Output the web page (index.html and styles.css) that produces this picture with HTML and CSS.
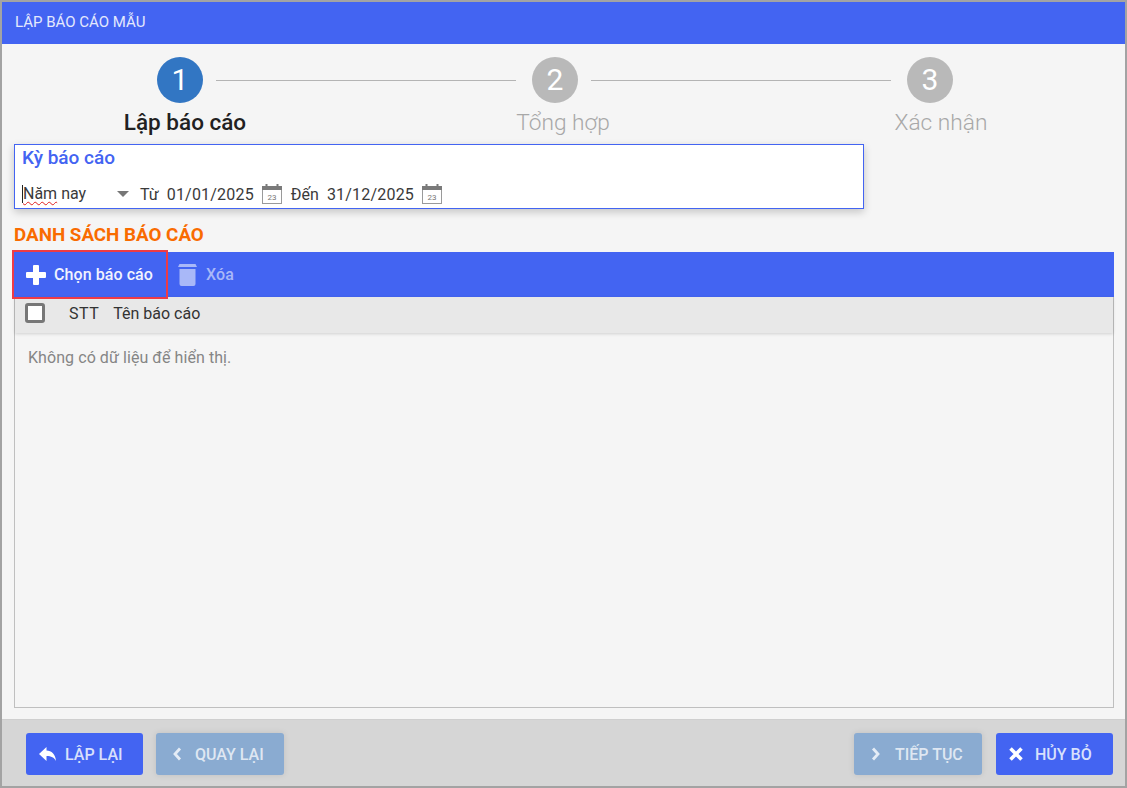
FILE: index.html
```html
<!DOCTYPE html>
<html lang="vi">
<head>
<meta charset="utf-8">
<title>Lập báo cáo mẫu</title>
<link rel="stylesheet" href="styles.css">
</head>
<body>
<div class="window">
  <header class="title-bar">LẬP BÁO CÁO MẪU</header>
  <main class="content">
    <div class="step-track">
      <div class="step-circle active">1</div>
      <div class="step-line"></div>
      <div class="step-circle">2</div>
      <div class="step-line"></div>
      <div class="step-circle">3</div>
    </div>
    <div class="step-labels">
      <div class="step-label active">Lập báo cáo</div>
      <div class="step-label">Tổng hợp</div>
      <div class="step-label">Xác nhận</div>
    </div>
    <section class="period">
      <div class="period-title">Kỳ báo cáo</div>
      <div class="period-row">
        <div class="period-select"><span class="caret-text"><span class="squiggle">Năm</span> nay</span><span class="arrow"></span></div>
        <span class="lbl">Từ</span>
        <span class="date">01/01/2025</span>
        <svg class="cal" viewBox="0 0 20 20" width="20" height="20">
          <rect x="0.500" y="2.500" width="19" height="17" fill="#fff" stroke="#9a9a9a"/>
          <rect x="0" y="2" width="20" height="4" fill="#7a7a7a"/>
          <rect x="3.500" y="0" width="2" height="3" fill="#7a7a7a"/>
          <rect x="14.500" y="0" width="2" height="3" fill="#7a7a7a"/>
          <text x="10" y="16" class="cal-num">23</text>
        </svg>
        <span class="lbl lbl-den">Đến</span>
        <span class="date">31/12/2025</span>
        <svg class="cal" viewBox="0 0 20 20" width="20" height="20">
          <rect x="0.500" y="2.500" width="19" height="17" fill="#fff" stroke="#9a9a9a"/>
          <rect x="0" y="2" width="20" height="4" fill="#7a7a7a"/>
          <rect x="3.500" y="0" width="2" height="3" fill="#7a7a7a"/>
          <rect x="14.500" y="0" width="2" height="3" fill="#7a7a7a"/>
          <text x="10" y="16" class="cal-num">23</text>
        </svg>
      </div>
    </section>
    <h2 class="list-title">DANH SÁCH BÁO CÁO</h2>
    <div class="toolbar">
      <button class="tool tool-add">
        <svg viewBox="0 0 20 20" width="20" height="20"><path d="M8 0h4a1 1 0 0 1 1 1v6h6a1 1 0 0 1 1 1v4a1 1 0 0 1-1 1h-6v6a1 1 0 0 1-1 1H8a1 1 0 0 1-1-1v-6H1a1 1 0 0 1-1-1V8a1 1 0 0 1 1-1h6V1a1 1 0 0 1 1-1z" fill="#fff"/></svg>
        <span>Chọn báo cáo</span>
      </button>
      <button class="tool tool-del">
        <svg viewBox="0 0 19 22" width="19" height="22"><path d="M1.500 0h16L19 3H0zM1.500 5h16v15a2 2 0 0 1-2 2h-12a2 2 0 0 1-2-2z" fill="#a9b8f8"/></svg>
        <span>Xóa</span>
      </button>
    </div>
    <div class="grid">
      <div class="grid-head">
        <span class="check"></span>
        <span class="col-stt">STT</span>
        <span class="col-name">Tên báo cáo</span>
      </div>
      <div class="grid-empty">Không có dữ liệu để hiển thị.</div>
    </div>
  </main>
  <footer class="footer">
    <button class="btn">
      <svg viewBox="0 0 17 14" width="17" height="14"><path d="M7.500 0v3.500c5 .2 9 3.500 9.500 10.500-1.800-3.600-4.800-5-9.500-5v5L0 7z" fill="#fff"/></svg>
      <span>LẬP LẠI</span>
    </button>
    <button class="btn btn-off btn-back">
      <svg viewBox="0 0 9 14" width="9" height="14"><path d="M7 1.500 2 7l5 5.500" fill="none" stroke="#e4ecf6" stroke-width="2.800"/></svg>
      <span>QUAY LẠI</span>
    </button>
    <div class="spacer"></div>
    <button class="btn btn-off btn-next">
      <svg viewBox="0 0 9 14" width="9" height="14"><path d="M2 1.500 7 7l-5 5.500" fill="none" stroke="#e4ecf6" stroke-width="2.800"/></svg>
      <span>TIẾP TỤC</span>
    </button>
    <button class="btn btn-cancel">
      <svg viewBox="0 0 14 14" width="14" height="14"><path d="M1.500 1.500l11 11M12.500 1.500l-11 11" fill="none" stroke="#fff" stroke-width="3.600"/></svg>
      <span>HỦY BỎ</span>
    </button>
  </footer>
</div>
</body>
</html>
```
FILE: styles.css
```css
* { box-sizing: border-box; }
html, body { margin: 0; height: 100%; }
body { font-family: Roboto, "Liberation Sans", sans-serif; background: #f5f5f5; }

.window {
  width: 1127px;
  height: 788px;
  border: 2px solid #a3a3a3;
  display: flex;
  flex-direction: column;
  background: #f5f5f5;
}

.title-bar {
  height: 42px;
  flex: none;
  background: #4364f2;
  color: #e4e9fd;
  font-size: 15px;
  line-height: 40px;
  padding-left: 13px;
}

.content { flex: 1; padding: 13px 11px 11px 12px; display: flex; flex-direction: column; min-height: 0; }

.step-track { display: flex; align-items: center; padding-left: 143px; height: 46px; flex: none; }
.step-circle {
  width: 46px; height: 46px; flex: none; border-radius: 50%;
  background: #b9b9b9; color: #fff;
  font-size: 30px; line-height: 46px; text-align: center;
}
.step-circle.active { background: #3276c3; }
.step-line { width: 300px; height: 1px; background: #b4b4b4; margin: 0 16px 0 13px; flex: none; }

.step-labels { display: flex; gap: 138px; padding-left: 51px; height: 41px; flex: none; }
.step-label { width: 240px; flex: none; text-align: center; font-size: 22.700px; font-weight: 300; color: #a8a8a8; white-space: nowrap; line-height: 39px; }
.step-label.active { font-size: 22.500px; font-weight: 500; color: #212121; }

.period {
  width: 850px; height: 65px; flex: none;
  background: #fff;
  border: 1px solid #4364f2;
  box-shadow: 0 3px 8px rgba(0,0,0,.2);
  padding: 2px 7px;
}
.period-title { color: #4364f2; font-size: 19px; font-weight: 500; line-height: 22px; }
.period-row { display: flex; align-items: center; height: 24px; margin-top: 13px; font-size: 16px; color: #3a3a3a; }
.period-select { width: 108px; display: flex; align-items: center; justify-content: space-between; flex: none; padding-right: 1px; }
.caret-text { border-left: 1px solid #222; line-height: 18px; }
.squiggle { text-decoration: underline wavy #e02020 1px; text-underline-offset: 2px; }
.arrow { width: 0; height: 0; border-left: 6px solid transparent; border-right: 6px solid transparent; border-top: 6px solid #777; }
.lbl { margin-left: 10px; }
.date { margin-left: 8px; letter-spacing: .2px; }
.cal { margin-left: 8px; flex: none; }
.cal-num { font: 8px Roboto, sans-serif; fill: #777; text-anchor: middle; }
.lbl-den { margin-left: 9px; }

.list-title { margin: 16px 0 6px; color: #f96b00; font-size: 18.800px; font-weight: 700; line-height: 21px; flex: none; }

.toolbar { height: 45px; flex: none; background: #4364f2; display: flex; align-items: center; width: 1100px; }
.tool { height: 45px; border: 0; background: none; display: flex; align-items: center; font: 500 16px Roboto, sans-serif; letter-spacing: .08px; padding: 0; position: relative; }
.tool-add { width: 152px; padding-left: 12px; gap: 8px; color: #f1f3fe; outline: 2px solid #ee3b47; }
.tool-del { margin-left: 12px; gap: 9px; color: #a9b8f8; }
.tool-del svg { margin-top: 1px; }

.grid { flex: 1; width: 1100px; border: 1px solid #bfbfbf; border-top: 0; display: flex; flex-direction: column; min-height: 0; }
.grid-head { height: 36px; flex: none; background: #e8e8e8; box-shadow: 0 1px 3px rgba(0,0,0,.15); display: flex; align-items: center; font-size: 16px; color: #333; padding-bottom: 4px; }
.check { width: 20px; height: 20px; background: #fff; border: 3px solid #777; border-radius: 3px; margin-left: 10px; flex: none; }
.col-stt { margin-left: 24px; letter-spacing: .5px; }
.col-name { margin-left: 14px; }
.grid-empty { padding: 16px 13px; font-size: 16px; letter-spacing: .07px; line-height: 18px; color: #858585; }

.footer { height: 67px; flex: none; background: #d6d6d6; border-top: 1px solid #cfcfcf; display: flex; align-items: center; padding: 2px 12px 0 24px; }
.btn {
  height: 42px; width: 117px; border: 0; border-radius: 3px;
  background: #4364f2; color: #d8e0fc;
  font: 500 16px Roboto, sans-serif;
  display: flex; align-items: center; gap: 9px; padding: 0 0 0 13px;
  flex: none;
}
.btn-off { width: 128px; background: #8aabd1; color: #dfe7f2; box-shadow: 0 0 6px rgba(0,0,0,.1); padding-left: 17px; gap: 13px; }
.btn-next { gap: 15px; }
.btn-back { margin-left: 13px; }
.btn-cancel { margin-left: 14px; gap: 12px; }
.spacer { flex: 1; }
```
